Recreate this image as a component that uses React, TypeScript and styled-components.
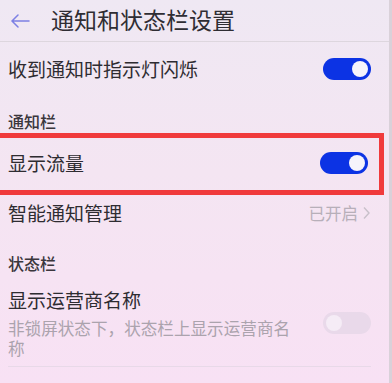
import React from 'react';
import styled, { createGlobalStyle } from 'styled-components';

const GlobalStyle = createGlobalStyle`
  html, body {
    margin: 0;
    padding: 0;
  }
  body {
    font-family: "Noto Sans CJK SC", "Noto Sans", sans-serif;
    background: #f4e6f3;
  }
`;

const Screen = styled.div`
  width: 392px;
  height: 383px;
  overflow: hidden;
  box-sizing: border-box;
  border-right: 3px solid #d9d1d9;
  background: linear-gradient(180deg, #efe8f3 0%, #f4e5f2 45%, #f8e1f4 100%);
  color: #333036;
`;

const Header = styled.div`
  display: flex;
  align-items: center;
  height: 41px;
  padding-left: 10px;
  border-bottom: 1px solid #ddd6de;

  svg {
    width: 20px;
    height: 14px;
    margin-right: 21px;
  }
`;

const Title = styled.div`
  font-size: 23px;
  line-height: 30px;
  margin-top: -3px;
  color: #2f2d33;
`;

const Row = styled.div<{ $height?: number }>`
  display: flex;
  align-items: center;
  justify-content: space-between;
  height: ${p => (p.$height ? `${p.$height}px` : 'auto')};
  padding: 0 18px 0 8px;
`;

const RowText = styled.div`
  display: flex;
  flex-direction: column;
  padding: 10px 0 8px;
`;

const Label = styled.div`
  font-size: 19px;
  line-height: 22px;
  color: #2e2c31;
`;

const Sub = styled.div`
  margin-top: 7px;
  font-size: 16.6px;
  line-height: 20px;
  color: #aba3ad;
  width: 290px;
`;

const Section = styled.div<{ $top: number; $bottom: number }>`
  padding: ${p => p.$top}px 8px ${p => p.$bottom}px;
  font-size: 16px;
  line-height: 16px;
  font-weight: 500;
  color: #3a363c;
`;

const Highlight = styled.div`
  margin: 0 5px 0 -6px;
  border: 5px solid #f03a3c;
  height: 52px;
  display: flex;
  align-items: center;

  ${Row} {
    flex: 1;
    padding: 0 11px 0 9px;
    margin-top: -3px;
  }
`;

const Track = styled.div<{ $on: boolean }>`
  width: 48px;
  height: 22px;
  border-radius: 11px;
  background: ${p => (p.$on ? '#0c33e4' : '#e9d9ea')};
  display: flex;
  align-items: center;
  justify-content: ${p => (p.$on ? 'flex-end' : 'flex-start')};
  padding: 0 3px;
  box-sizing: border-box;
`;

const Knob = styled.div<{ $on: boolean }>`
  width: 16px;
  height: 16px;
  border-radius: 50%;
  background: ${p => (p.$on ? '#f6f4fb' : '#f5ecf6')};
`;

const Value = styled.div`
  display: flex;
  align-items: center;
  gap: 4px;
  font-size: 16.5px;
  color: #b7afb9;

  svg {
    width: 9px;
    height: 14px;
  }
`;

const Divider = styled.div`
  height: 1px;
  margin: 0 18px 0 8px;
  background: #e8d9e8;
`;

const Switch = ({ on }: { on: boolean }) => (
  <Track $on={on}>
    <Knob $on={on} />
  </Track>
);

const Chevron = () => (
  <svg viewBox="0 0 9 14" fill="none" stroke="#c8c0ca" strokeWidth="1.4">
    <path d="M2 1.5 L7 7 L2 12.5" />
  </svg>
);

export default function App() {
  return (
    <>
      <GlobalStyle />
      <Screen>
        <Header>
          <svg viewBox="0 0 20 14" fill="none" stroke="#7d80e4" strokeWidth="1.5" strokeLinecap="round">
            <path d="M8 1 L2 7 L8 13 M2 7 H19" />
          </svg>
          <Title>通知和状态栏设置</Title>
        </Header>

        <Row $height={54}>
          <Label>收到通知时指示灯闪烁</Label>
          <Switch on />
        </Row>

        <Section $top={17} $bottom={4}>通知栏</Section>

        <Highlight>
          <Row>
            <Label>显示流量</Label>
            <Switch on />
          </Row>
        </Highlight>

        <Row $height={36}>
          <Label>智能通知管理</Label>
          <Value>
            已开启
            <Chevron />
          </Value>
        </Row>

        <Section $top={24} $bottom={8}>状态栏</Section>

        <Row>
          <RowText>
            <Label>显示运营商名称</Label>
            <Sub>非锁屏状态下，状态栏上显示运营商名称</Sub>
          </RowText>
          <Switch on={false} />
        </Row>
        <Divider />
      </Screen>
    </>
  );
}
